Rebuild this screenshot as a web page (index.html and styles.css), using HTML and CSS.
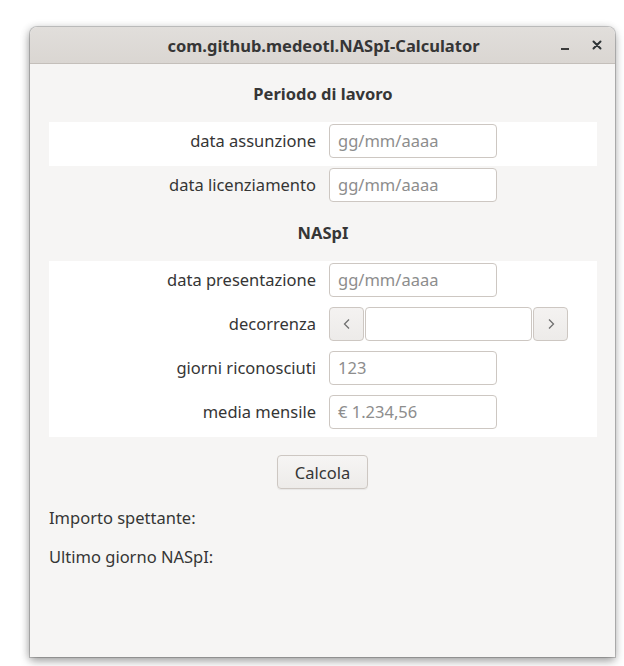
FILE: index.html
```html
<!DOCTYPE html>
<html lang="it">
<head>
<meta charset="utf-8">
<title>NASpI Calculator</title>
<link rel="stylesheet" href="styles.css">
</head>
<body>
<div class="window">
  <header class="titlebar">
    <span class="title">com.github.medeotl.NASpI-Calculator</span>
    <div class="controls">
      <span class="ctl minimize"><svg width="10" height="10" viewBox="0 0 10 10"><rect x="1" y="8" width="8" height="2" fill="#3a3a3a"/></svg></span>
      <span class="ctl close"><svg width="10" height="10" viewBox="0 0 10 10"><path d="M1.5 1.5 L8.5 8.5 M8.5 1.5 L1.5 8.5" stroke="#2e3436" stroke-width="2" stroke-linecap="round"/></svg></span>
    </div>
  </header>
  <main class="content">
    <h2 class="section-title">Periodo di lavoro</h2>
    <div class="group">
      <div class="row white">
        <label class="lbl">data assunzione</label>
        <div class="field"><span class="entry placeholder">gg/mm/aaaa</span></div>
      </div>
      <div class="row">
        <label class="lbl">data licenziamento</label>
        <div class="field"><span class="entry placeholder">gg/mm/aaaa</span></div>
      </div>
    </div>
    <h2 class="section-title second">NASpI</h2>
    <div class="group white">
      <div class="row">
        <label class="lbl">data presentazione</label>
        <div class="field"><span class="entry placeholder">gg/mm/aaaa</span></div>
      </div>
      <div class="row">
        <label class="lbl">decorrenza</label>
        <div class="field stepper">
          <span class="step-btn"><svg width="12" height="14" viewBox="0 0 12 14"><path d="M8 2.5 L3.5 7 L8 11.5" fill="none" stroke="#707070" stroke-width="1.3"/></svg></span>
          <span class="entry mid"></span>
          <span class="step-btn"><svg width="12" height="14" viewBox="0 0 12 14"><path d="M4 2.5 L8.5 7 L4 11.5" fill="none" stroke="#707070" stroke-width="1.3"/></svg></span>
        </div>
      </div>
      <div class="row">
        <label class="lbl">giorni riconosciuti</label>
        <div class="field"><span class="entry placeholder">123</span></div>
      </div>
      <div class="row">
        <label class="lbl">media mensile</label>
        <div class="field"><span class="entry placeholder">€ 1.234,56</span></div>
      </div>
    </div>
    <div class="actions"><button class="btn">Calcola</button></div>
    <p class="result">Importo spettante:</p>
    <p class="result">Ultimo giorno NASpI:</p>
  </main>
</div>
</body>
</html>
```

FILE: styles.css
```css
* { box-sizing: border-box; }
html, body { margin: 0; padding: 0; background: #ffffff; }
body {
  font-family: "Noto Sans", "DejaVu Sans", sans-serif;
  font-size: 16.5px;
  color: #353535;
  padding: 27px 9px 0 30px;
  height: 666px;
  overflow: hidden;
}
.window {
  width: 585px;
  height: 630px;
  background: #f6f5f4;
  border-radius: 7px 7px 0 0;
  box-shadow: 0 4px 10px rgba(0,0,0,0.35), 0 0 0 1px rgba(0,0,0,0.18), -2px 0 8px rgba(0,0,0,0.12);
  display: flex;
  flex-direction: column;
  overflow: hidden;
}
.titlebar {
  height: 37px;
  flex: none;
  background: linear-gradient(#e1dedb, #dad6d2);
  border-bottom: 1px solid #c4bfba;
  border-radius: 7px 7px 0 0;
  display: flex;
  align-items: center;
  justify-content: center;
  position: relative;
}
.title {
  font-weight: bold;
  font-size: 16.5px;
  color: #363636;
  padding-left: 2px;
}
.controls {
  position: absolute;
  right: 13px;
  top: 13px;
  display: flex;
  gap: 22px;
}
.ctl { display: block; width: 10px; height: 10px; }
.ctl svg { display: block; }
.content {
  padding: 20px 18px 0 19px;
  display: flex;
  flex-direction: column;
}
.section-title {
  margin: 0 0 18px 0;
  font-size: 16.5px;
  line-height: 20px;
  font-weight: bold;
  text-align: center;
  color: #363636;
}
.section-title.second { margin-top: 13px; }
.group.white, .row.white { background: #ffffff; }
.row {
  height: 44px;
  display: flex;
  align-items: flex-start;
  padding-top: 2px;
}
.lbl {
  width: 267px;
  text-align: right;
  line-height: 34px;
  flex: none;
  white-space: nowrap;
}
.field {
  margin-left: 13px;
  display: flex;
}
.entry {
  display: block;
  width: 168px;
  height: 34px;
  border: 1px solid #cdc7c2;
  border-radius: 4px;
  background: #ffffff;
  line-height: 32px;
  padding-left: 8px;
}
.placeholder { color: #8d8d8d; }
.stepper { gap: 1px; }
.step-btn {
  width: 35px;
  height: 34px;
  border: 1px solid #cdc7c2;
  border-radius: 4px;
  background: linear-gradient(#f4f2f1, #edebe9);
  display: flex;
  align-items: center;
  justify-content: center;
}
.step-btn svg { display: block; }
.entry.mid { width: 167px; }
.actions {
  display: flex;
  justify-content: center;
  margin-top: 18px;
}
.btn {
  width: 91px;
  height: 34px;
  font-family: inherit;
  font-size: 16.5px;
  color: #363636;
  border: 1px solid #cdc7c2;
  border-radius: 4px;
  background: linear-gradient(#f6f5f4, #edebe9);
  box-shadow: 0 1px 1px rgba(0,0,0,0.06);
  padding: 0;
  margin-left: -1px;
}
.result {
  margin: 19px 0 0 0;
  line-height: 20px;
}
.result + .result { margin-top: 19px; }
```
